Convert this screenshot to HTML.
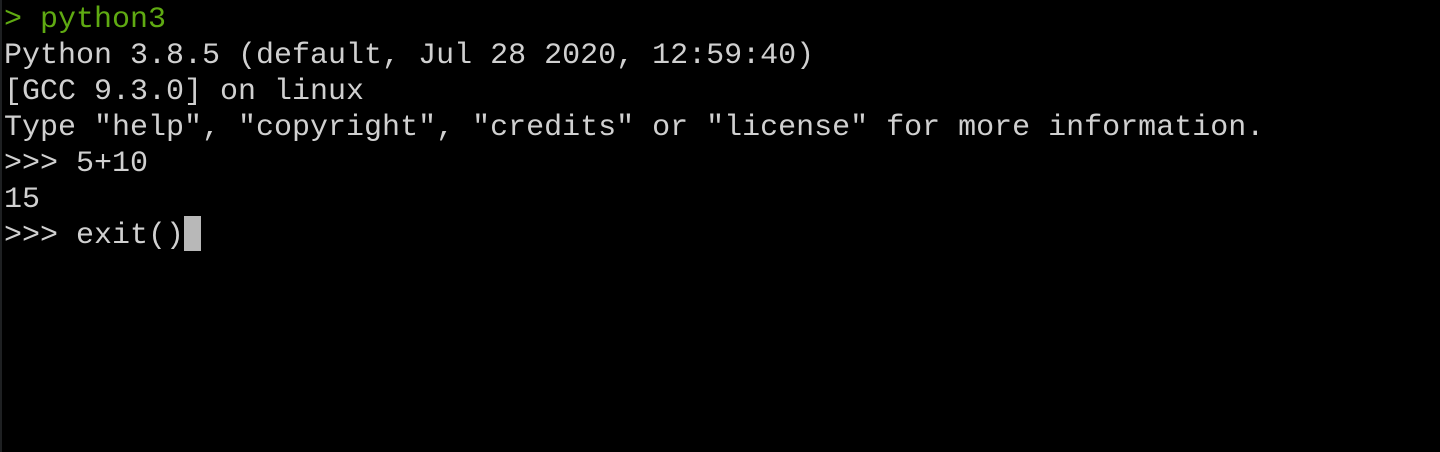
<!DOCTYPE html>
<html><head><meta charset="utf-8"><style>
html,body{margin:0;padding:0;background:#000;width:1440px;height:452px;overflow:hidden}
.bar{position:absolute;left:0;top:0;width:2px;height:452px;background:#1e2022}
pre{position:absolute;left:4px;top:2px;margin:0;font-family:"Liberation Mono",monospace;font-size:30px;line-height:36px;color:#d0d0d0;letter-spacing:0}
.g{color:#5faa12}
.cur{display:inline-block;width:17px;height:35px;background:#b8b8b8;vertical-align:top;margin-top:-2px}
</style></head><body><div class="bar"></div>
<pre><span class="g">&gt; python3</span>
Python 3.8.5 (default, Jul 28 2020, 12:59:40)
[GCC 9.3.0] on linux
Type "help", "copyright", "credits" or "license" for more information.
&gt;&gt;&gt; 5+10
15
&gt;&gt;&gt; exit()<span class="cur"></span></pre>
</body></html>
